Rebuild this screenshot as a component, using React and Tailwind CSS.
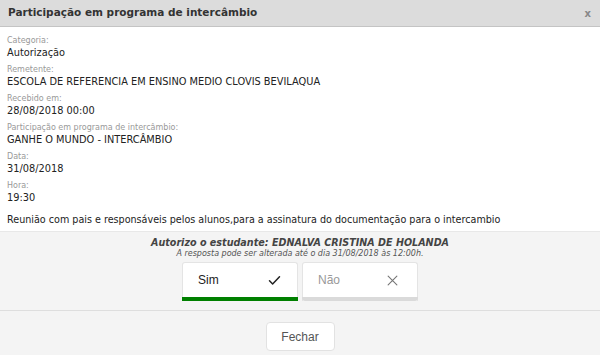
import React from 'react';

const fields = [
    { label: 'Categoria:', value: 'Autorização' },
    { label: 'Remetente:', value: 'ESCOLA DE REFERENCIA EM ENSINO MEDIO CLOVIS BEVILAQUA' },
    { label: 'Recebido em:', value: '28/08/2018 00:00' },
    { label: 'Participação em programa de intercâmbio:', value: 'GANHE O MUNDO - INTERCÂMBIO' },
    { label: 'Data:', value: '31/08/2018' },
    { label: 'Hora:', value: '19:30' },
];

function App() {
    return (
        <div className="w-[600px] h-[355px] bg-[#f4f4f4] overflow-hidden font-['DejaVu_Sans',Verdana,sans-serif]">
            {/* header */}
            <div className="h-[27px] bg-[#dcdcdc] border-b border-[#c4c4c4] flex items-center justify-between pl-2 pr-[9px]">
                <h1 className="text-[10.5px] font-bold text-[#333]">Participação em programa de intercâmbio</h1>
                <span className="text-[10px] font-bold text-[#888]">x</span>
            </div>

            {/* body */}
            <div className="bg-white px-[7px] pt-[8px] h-[205px] border-b border-[#e8e8e8]">
                {fields.map((f) => (
                    <div key={f.label} className="mb-[5px]">
                        <div className="text-[8px] leading-[11px] text-[#999]">{f.label}</div>
                        <div className="text-[9.8px] leading-[13px] text-[#222]">{f.value}</div>
                    </div>
                ))}
                <p className="text-[9.6px] leading-[13px] text-[#222] mt-[9px]">
                    Reunião com pais e responsáveis pelos alunos,para a assinatura do documentação para o intercambio
                </p>
            </div>

            {/* answer */}
            <div className="text-center pt-[5px]">
                <div className="text-[9.6px] leading-[12px] font-bold italic text-[#444]">
                    Autorizo o estudante: EDNALVA CRISTINA DE HOLANDA
                </div>
                <div className="text-[8px] leading-[10px] italic text-[#555]">
                    A resposta pode ser alterada até o dia 31/08/2018 às 12:00h.
                </div>
            </div>
            <div className="flex justify-center gap-[4px] mt-[3px] font-['Liberation_Sans',Arial,sans-serif]">
                <button className="w-[116px] h-[39px] bg-white border border-[#e4e4e4] border-b-0 rounded-t-[3px] flex flex-col">
                    <span className="flex-1 flex items-center justify-between pl-[15px] pr-[15px] text-[12px] text-[#222]">
                        Sim
                        <svg width="15" height="15" viewBox="0 0 24 24" fill="none" stroke="#222" strokeWidth="2.4" strokeLinecap="round" strokeLinejoin="round">
                            <path d="M4 12.5l5 5L20 6" />
                        </svg>
                    </span>
                    <span className="h-[4px] bg-[#008000] -mx-px"></span>
                </button>
                <button className="w-[116px] h-[39px] bg-white border border-[#e4e4e4] border-b-0 rounded-t-[3px] flex flex-col">
                    <span className="flex-1 flex items-center justify-between pl-[15px] pr-[17px] text-[12px] text-[#999]">
                        Não
                        <svg width="15" height="15" viewBox="0 0 24 24" fill="none" stroke="#777" strokeWidth="1.8" strokeLinecap="round">
                            <path d="M5 5l14 14M19 5L5 19" />
                        </svg>
                    </span>
                    <span className="h-[4px] bg-[#dadada] -mx-px rounded-b-[3px]"></span>
                </button>
            </div>

            {/* footer */}
            <div className="border-t border-[#dedede] mt-[9px] flex justify-center pt-[11px]">
                <button className="w-[69px] h-[29px] bg-white border border-[#e2e2e2] rounded-[4px] text-[12px] text-[#555] font-['Liberation_Sans',Arial,sans-serif]">
                    Fechar
                </button>
            </div>
        </div>
    );
}

export default App;
